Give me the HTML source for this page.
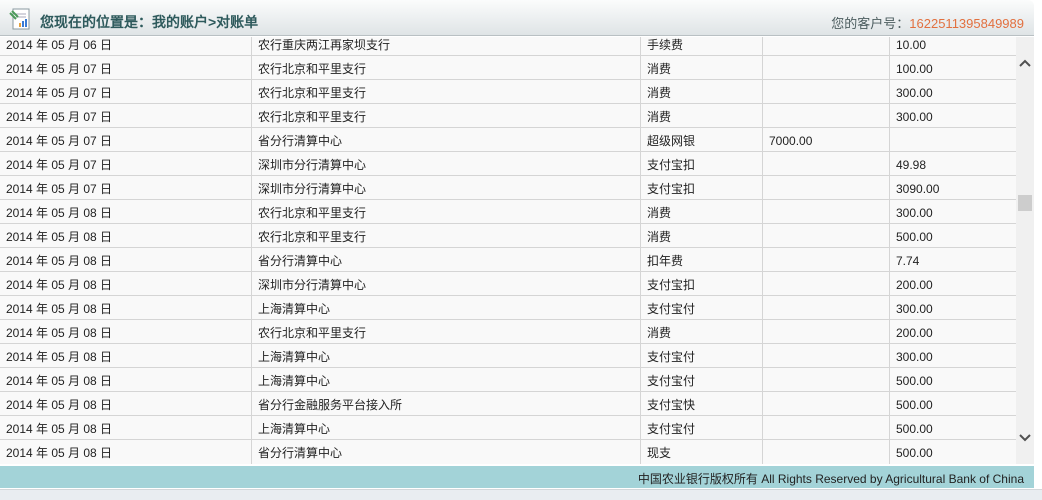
<!DOCTYPE html>
<html><head><meta charset="utf-8"><style>
*{margin:0;padding:0;box-sizing:border-box}
body{width:1042px;height:500px;overflow:hidden;background:#fff;font-family:"Liberation Sans","Noto Sans CJK SC",sans-serif;font-size:12px;color:#222;position:relative}
#hdr{position:absolute;left:0;top:0;width:1034px;height:36px;background:linear-gradient(#fbfcfc,#dfe4e6);border-bottom:1px solid #b9c0c3;border-radius:0 6px 0 0;z-index:2}
#hdr .t{position:absolute;left:40px;top:12px;font-size:14px;font-weight:bold;color:#2e5a5c;font-family:"Liberation Sans","WenQuanYi Zen Hei",sans-serif}
#hdr .r{position:absolute;right:10px;top:13px;font-size:13px;color:#4b5c5e}
#hdr .r span{color:#e2703f}
#tbl{position:absolute;left:0;top:37px;width:1016px;height:427px;overflow:hidden;background:#f9f9f9}
.row{position:absolute;left:0;width:1016px;height:24px;border-bottom:1px solid #d5d5d5}
.row div{position:absolute;top:0;height:24px;line-height:26px;padding-left:6px;border-right:1px solid #d5d5d5;white-space:nowrap}
.c1{left:0;width:252px}.c2{left:252px;width:389px}.c3{left:641px;width:122px}.c4{left:763px;width:127px}.c5{left:890px;width:126px;border-right:none!important}
#sb{position:absolute;left:1016px;top:37px;width:18px;height:427px;background:#f0f0f0}
#thumb{position:absolute;left:2px;top:158px;width:14px;height:16px;background:#cdcdcd}
#ftr{position:absolute;left:0;top:466px;width:1034px;height:22px;background:#a3d3d8;text-align:right;padding-right:10px;line-height:27px;font-size:12px;color:#222}
#bot{position:absolute;left:0;top:489px;width:1042px;height:11px;background:#e9edf1;border-top:1px solid #d3d7da}
</style></head><body>
<div id="hdr">
<svg style="position:absolute;left:8px;top:7px" width="24" height="24" viewBox="0 0 24 24"><rect x="5" y="2" width="16" height="20" fill="#fff" stroke="#8a9aa0"/><line x1="8" y1="7" x2="18" y2="7" stroke="#aab"/><line x1="8" y1="10" x2="18" y2="10" stroke="#aab"/><rect x="14" y="14" width="2" height="6" fill="#3a7bd5"/><rect x="17" y="12" width="2" height="8" fill="#3a7bd5"/><rect x="11" y="16" width="2" height="4" fill="#e6a23c"/><path d="M2 6 l6 6 M4 4 l6 6" stroke="#4c9a5a" stroke-width="2"/></svg>
<div class="t">您现在的位置是：我的账户&gt;对账单</div>
<div class="r">您的客户号：<span>1622511395849989</span></div>
</div>
<div id="tbl">
<div class="row" style="top:-5px"><div class="c1">2014 年 05 月 06 日</div><div class="c2">农行重庆两江再家坝支行</div><div class="c3">手续费</div><div class="c4"></div><div class="c5">10.00</div></div>
<div class="row" style="top:19px"><div class="c1">2014 年 05 月 07 日</div><div class="c2">农行北京和平里支行</div><div class="c3">消费</div><div class="c4"></div><div class="c5">100.00</div></div>
<div class="row" style="top:43px"><div class="c1">2014 年 05 月 07 日</div><div class="c2">农行北京和平里支行</div><div class="c3">消费</div><div class="c4"></div><div class="c5">300.00</div></div>
<div class="row" style="top:67px"><div class="c1">2014 年 05 月 07 日</div><div class="c2">农行北京和平里支行</div><div class="c3">消费</div><div class="c4"></div><div class="c5">300.00</div></div>
<div class="row" style="top:91px"><div class="c1">2014 年 05 月 07 日</div><div class="c2">省分行清算中心</div><div class="c3">超级网银</div><div class="c4">7000.00</div><div class="c5"></div></div>
<div class="row" style="top:115px"><div class="c1">2014 年 05 月 07 日</div><div class="c2">深圳市分行清算中心</div><div class="c3">支付宝扣</div><div class="c4"></div><div class="c5">49.98</div></div>
<div class="row" style="top:139px"><div class="c1">2014 年 05 月 07 日</div><div class="c2">深圳市分行清算中心</div><div class="c3">支付宝扣</div><div class="c4"></div><div class="c5">3090.00</div></div>
<div class="row" style="top:163px"><div class="c1">2014 年 05 月 08 日</div><div class="c2">农行北京和平里支行</div><div class="c3">消费</div><div class="c4"></div><div class="c5">300.00</div></div>
<div class="row" style="top:187px"><div class="c1">2014 年 05 月 08 日</div><div class="c2">农行北京和平里支行</div><div class="c3">消费</div><div class="c4"></div><div class="c5">500.00</div></div>
<div class="row" style="top:211px"><div class="c1">2014 年 05 月 08 日</div><div class="c2">省分行清算中心</div><div class="c3">扣年费</div><div class="c4"></div><div class="c5">7.74</div></div>
<div class="row" style="top:235px"><div class="c1">2014 年 05 月 08 日</div><div class="c2">深圳市分行清算中心</div><div class="c3">支付宝扣</div><div class="c4"></div><div class="c5">200.00</div></div>
<div class="row" style="top:259px"><div class="c1">2014 年 05 月 08 日</div><div class="c2">上海清算中心</div><div class="c3">支付宝付</div><div class="c4"></div><div class="c5">300.00</div></div>
<div class="row" style="top:283px"><div class="c1">2014 年 05 月 08 日</div><div class="c2">农行北京和平里支行</div><div class="c3">消费</div><div class="c4"></div><div class="c5">200.00</div></div>
<div class="row" style="top:307px"><div class="c1">2014 年 05 月 08 日</div><div class="c2">上海清算中心</div><div class="c3">支付宝付</div><div class="c4"></div><div class="c5">300.00</div></div>
<div class="row" style="top:331px"><div class="c1">2014 年 05 月 08 日</div><div class="c2">上海清算中心</div><div class="c3">支付宝付</div><div class="c4"></div><div class="c5">500.00</div></div>
<div class="row" style="top:355px"><div class="c1">2014 年 05 月 08 日</div><div class="c2">省分行金融服务平台接入所</div><div class="c3">支付宝快</div><div class="c4"></div><div class="c5">500.00</div></div>
<div class="row" style="top:379px"><div class="c1">2014 年 05 月 08 日</div><div class="c2">上海清算中心</div><div class="c3">支付宝付</div><div class="c4"></div><div class="c5">500.00</div></div>
<div class="row" style="top:403px;border-bottom:none"><div class="c1">2014 年 05 月 08 日</div><div class="c2">省分行清算中心</div><div class="c3">现支</div><div class="c4"></div><div class="c5">500.00</div></div>
</div>
<div id="sb">
<svg style="position:absolute;left:3px;top:22px" width="12" height="8" viewBox="0 0 12 8"><path d="M1 7 L6 2 L11 7" fill="none" stroke="#505050" stroke-width="2"/></svg>
<div id="thumb"></div>
<svg style="position:absolute;left:3px;top:397px" width="12" height="8" viewBox="0 0 12 8"><path d="M1 1 L6 6 L11 1" fill="none" stroke="#505050" stroke-width="2"/></svg>
</div>
<div id="ftr">中国农业银行版权所有 All Rights Reserved by Agricultural Bank of China</div>
<div id="bot"></div>
</body></html>
